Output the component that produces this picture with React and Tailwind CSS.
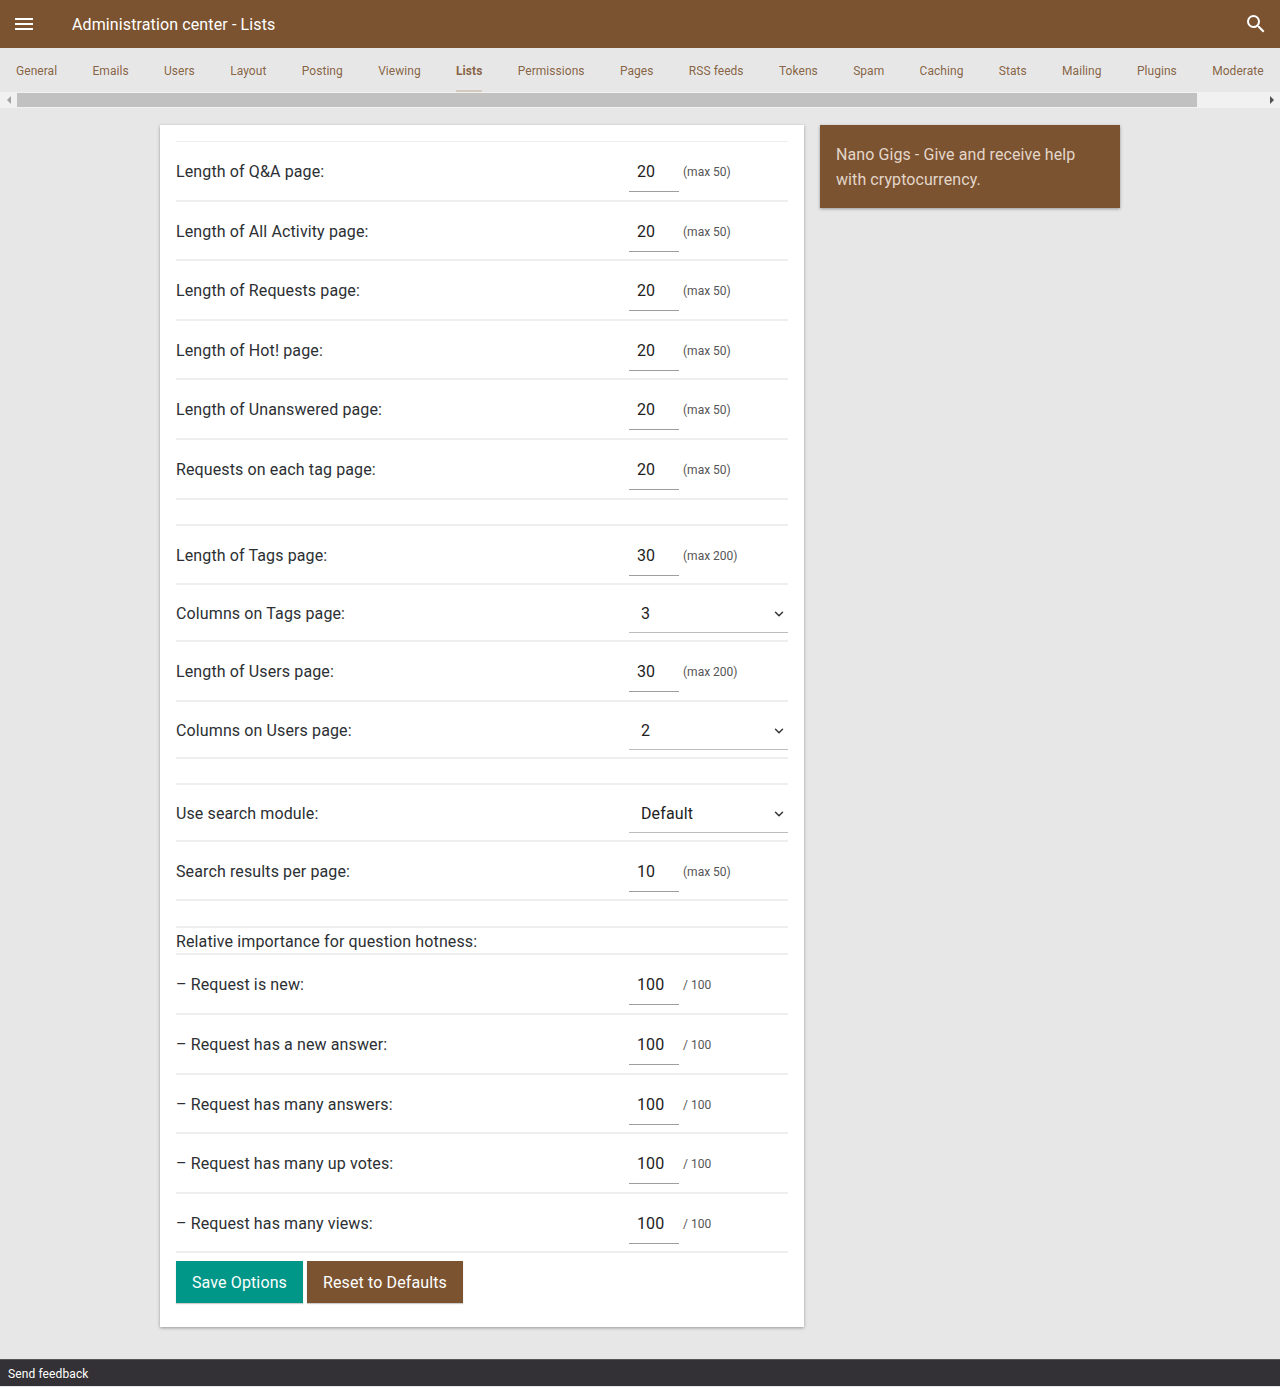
import { ChevronDown } from 'lucide-react';

const tabs = ['General', 'Emails', 'Users', 'Layout', 'Posting', 'Viewing', 'Lists', 'Permissions', 'Pages', 'RSS feeds', 'Tokens', 'Spam', 'Caching', 'Stats', 'Mailing', 'Plugins', 'Moderate'];

const InputRow = ({ label, value, note }) => (
  <div className="flex h-[59.6px] items-start border-b-2 border-[#eeeeee]">
    <div className="w-[453px] pt-[19px] leading-[22px]">{label}</div>
    <div className="mt-[1px] flex h-[49px] w-[50px] border-b border-[#9e9e9e] pl-2 pt-[18px] leading-[22px] text-[#222222]">{value}</div>
    <div className="pl-1 pt-[21px] text-xs leading-[18px] tracking-normal text-[#555555]">{note}</div>
  </div>
);

const SelectRow = ({ label, value }) => (
  <div className="flex h-[57px] items-start border-b-2 border-[#eeeeee]">
    <div className="w-[453px] pt-[18px] leading-[22px]">{label}</div>
    <div className="flex h-[48px] w-[159px] items-start justify-between border-b border-[#bdbdbd] pl-3 pr-[2px] pt-[18px] leading-[22px] text-[#222222]">
      <span>{value}</span>
      <ChevronDown size={14} strokeWidth={2.5} className="mt-[4px] text-[#333333]" />
    </div>
  </div>
);

const Spacer = ({ className = 'h-[26px]' }) => <div className={`${className} border-b-2 border-[#eeeeee]`} />;

export default function App() {
  return (
    <div className="flex h-[1387px] flex-col bg-[#e7e7e7] font-['Roboto',sans-serif] tracking-[0.12px] text-[#2c2f33]">
      <header className="flex h-12 items-center bg-[#7b5330] px-3 text-white">
        <svg width="24" height="24" viewBox="0 0 24 24" fill="currentColor">
          <path d="M3 18h18v-2H3v2zm0-5h18v-2H3v2zm0-7v2h18V6H3z" />
        </svg>
        <div className="ml-[36px] flex-1 pt-[2px] text-base">Administration center - Lists</div>
        <svg width="24" height="24" viewBox="0 0 24 24" fill="currentColor">
          <path d="M15.5 14h-.79l-.28-.27A6.471 6.471 0 0 0 16 9.5 6.5 6.5 0 1 0 9.5 16c1.61 0 3.09-.59 4.23-1.57l.27.28v.79l5 4.99L20.49 19l-4.99-5zm-6 0C7.01 14 5 11.99 5 9.5S7.01 5 9.5 5 14 7.01 14 9.5 11.99 14 9.5 14z" />
        </svg>
      </header>

      <nav className="flex h-11 items-start gap-[35.33px] px-4 text-xs tracking-[0.05px] text-[#7b5330]/90">
        {tabs.map((tab) => (
          <div
            key={tab}
            className={tab === 'Lists' ? 'flex h-[44px] items-center border-b-2 border-[#d5c9be] pt-[3px] font-bold' : 'flex h-[44px] items-center pt-[2px]'}
          >
            {tab}
          </div>
        ))}
      </nav>

      <div className="flex h-4 bg-[#f1f1f1]">
        <div className="flex w-[17px] items-center justify-center">
          <div className="h-0 w-0 border-y-4 border-r-4 border-y-transparent border-r-[#a3a3a3]" />
        </div>
        <div className="mt-[1px] h-[14px] w-[1180px] bg-[#c1c1c1]" />
        <div className="flex flex-1 items-center justify-end pr-[6px]">
          <div className="h-0 w-0 border-y-4 border-l-4 border-y-transparent border-l-[#505050]" />
        </div>
      </div>

      <main className="flex flex-1 items-start justify-center gap-4 pt-[17px]">
        <section className="h-[1202px] w-[644px] bg-white px-4 pt-4 shadow-[0_1px_3px_rgba(0,0,0,0.35)]">
          <div className="border-t border-[#eeeeee]" />
          <InputRow label="Length of Q&A page:" value="20" note="(max 50)" />
          <InputRow label="Length of All Activity page:" value="20" note="(max 50)" />
          <InputRow label="Length of Requests page:" value="20" note="(max 50)" />
          <InputRow label="Length of Hot! page:" value="20" note="(max 50)" />
          <InputRow label="Length of Unanswered page:" value="20" note="(max 50)" />
          <InputRow label="Requests on each tag page:" value="20" note="(max 50)" />
          <Spacer />
          <InputRow label="Length of Tags page:" value="30" note="(max 200)" />
          <SelectRow label="Columns on Tags page:" value="3" />
          <InputRow label="Length of Users page:" value="30" note="(max 200)" />
          <SelectRow label="Columns on Users page:" value="2" />
          <Spacer />
          <SelectRow label="Use search module:" value="Default" />
          <InputRow label="Search results per page:" value="10" note="(max 50)" />
          <Spacer className="h-[27px]" />
          <div className="h-[27px] border-b-2 border-[#eeeeee] pt-[3px] leading-[22px]">Relative importance for question hotness:</div>
          <InputRow label="– Request is new:" value="100" note="/ 100" />
          <InputRow label="– Request has a new answer:" value="100" note="/ 100" />
          <InputRow label="– Request has many answers:" value="100" note="/ 100" />
          <InputRow label="– Request has many up votes:" value="100" note="/ 100" />
          <InputRow label="– Request has many views:" value="100" note="/ 100" />
          <div className="flex gap-1 pt-2">
            <button className="h-[42px] bg-[#009688] px-4 pt-[2px] text-white shadow-[0_1px_1px_rgba(0,0,0,0.2)]">Save Options</button>
            <button className="h-[42px] bg-[#7b5330] px-4 pt-[2px] text-white shadow-[0_1px_1px_rgba(0,0,0,0.2)]">Reset to Defaults</button>
          </div>
        </section>

        <aside className="h-[83px] w-[300px] bg-[#7b5330] px-4 pt-[17px] leading-[25px] tracking-[0.08px] text-[#e3d6ca] shadow-[0_1px_3px_rgba(0,0,0,0.35)]">
          Nano Gigs - Give and receive help with cryptocurrency.
        </aside>
      </main>

      <footer className="mb-px flex h-[27px] items-center border-t border-[#555555] bg-[#333135] pl-2 pt-[2px] text-xs text-white">
        Send feedback
      </footer>
    </div>
  );
}
